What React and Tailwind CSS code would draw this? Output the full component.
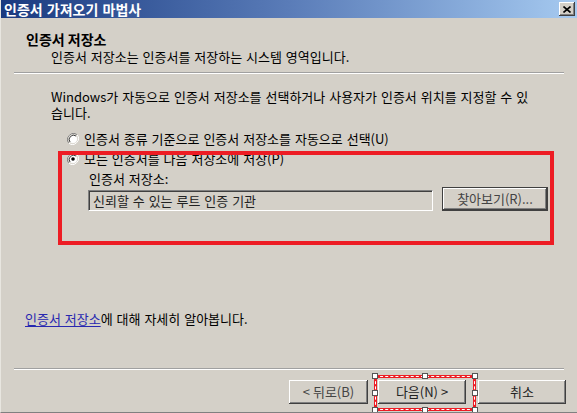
import React from "react";

const btn3d =
  "shadow-[inset_-1px_-1px_0_#404040,inset_1px_1px_0_#ffffff,inset_-2px_-2px_0_#808080,inset_2px_2px_0_#d4d0c8]";

function Radio({ checked }) {
  return (
    <svg width="12" height="12" viewBox="0 0 12 12" className="shrink-0">
      <path d="M10.2 1.8A6 6 0 0 0 1.8 10.2" fill="none" stroke="#808080" strokeWidth="1" />
      <path d="M1.8 10.2A6 6 0 0 0 10.2 1.8" fill="none" stroke="#ffffff" strokeWidth="1" />
      <circle cx="6" cy="6" r="4.5" fill="#ffffff" stroke="#d4d0c8" strokeWidth="0.6" />
      <path d="M9 3A4.3 4.3 0 0 0 3 9" fill="none" stroke="#404040" strokeWidth="1" />
      {checked && <circle cx="6" cy="6" r="1.8" fill="#000000" />}
    </svg>
  );
}

function Separator() {
  return <div className="mx-[13px] h-[2px] border-t border-t-[#a0a0a0] border-b border-b-white" />;
}

function Handle({ className }) {
  return <div className={"absolute w-[6px] h-[6px] bg-white border border-[#555] " + className} />;
}

export default function App() {
  return (
    <div className="relative w-[577px] h-[413px] overflow-hidden bg-[#d4d0c8] flex flex-col text-black font-['Noto_Sans_CJK_KR','Noto_Sans',sans-serif] text-[13px] [word-spacing:1px] border-b border-b-[#808080] border-l border-l-[#e8e6e0]">
      {/* title bar */}
      <div className="h-[18px] shrink-0 flex items-center justify-between pl-[3px] pr-[2px] bg-gradient-to-r from-[#1a3a80] via-[#5a7cb8] to-[#a6caf0]">
        <span className="text-white font-bold text-[14px] leading-none [word-spacing:1px]">인증서 가져오기 마법사</span>
        <button className={"w-[16px] h-[14px] bg-[#d4d0c8] flex items-center justify-center " + btn3d}>
          <svg width="8" height="7" viewBox="0 0 8 7">
            <path d="M0.5 0.5L7.5 6.5M7.5 0.5L0.5 6.5" stroke="#000" strokeWidth="1.6" />
          </svg>
        </button>
      </div>

      {/* header */}
      <div className="pl-[25px] pt-[13px]">
        <div className="font-bold text-[14px] leading-[16px] [word-spacing:0]">인증서 저장소</div>
        <div className="pl-[25px] mt-[2px] leading-[16px]">인증서 저장소는 인증서를 저장하는 시스템 영역입니다.</div>
      </div>
      <div className="mt-[7px]">
        <Separator />
      </div>

      {/* body */}
      <div className="pl-[50px] pt-[15px]">
        <div className="leading-[16px]">Windows가 자동으로 인증서 저장소를 선택하거나 사용자가 인증서 위치를 지정할 수 있</div>
        <div className="leading-[16px]">습니다.</div>
        <div className="mt-[10px] pl-[16px] h-[16px] flex items-center gap-[5px]">
          <Radio />
          <span>인증서 종류 기준으로 인증서 저장소를 자동으로 선택(U)</span>
        </div>
        <div className="mt-[4px] pl-[16px] h-[16px] flex items-center gap-[5px]">
          <Radio checked />
          <span>모든 인증서를 다음 저장소에 저장(P)</span>
        </div>
        <div className="mt-[4px] pl-[38px] leading-[16px]">인증서 저장소:</div>
        <div className="pl-[37px] flex items-end gap-[9px]">
          <div className="w-[345px] h-[21px] flex items-center pl-[4px] border border-t-[#808080] border-l-[#808080] border-b-white border-r-white shadow-[inset_1px_1px_0_#404040,inset_-1px_-1px_0_#d4d0c8] text-[#222]">
            신뢰할 수 있는 루트 인증 기관
          </div>
          <button className={"w-[106px] h-[24px] border border-[#404040] bg-[#d4d0c8] text-[#444] flex items-center justify-center " + btn3d}>
            찾아보기(R)...
          </button>
        </div>
      </div>

      {/* learn more link */}
      <div className="mt-[100px] pl-[24px] leading-[16px]">
        <span className="text-[#2828b0] underline underline-offset-2">인증서 저장소</span>에 대해 자세히 알아봅니다.
      </div>

      <div className="mt-[41px]">
        <Separator />
      </div>

      {/* buttons */}
      <div className="mt-[10px] flex justify-end pr-[11px]">
        <button className={"w-[79px] h-[24px] bg-[#d4d0c8] text-[#444] flex items-center justify-center " + btn3d}>
          &lt; 뒤로(B)
        </button>
        <button className={"ml-[10px] w-[88px] h-[24px] bg-[#d4d0c8] text-[#222] flex items-center justify-center " + btn3d}>
          다음(N) &gt;
        </button>
        <button className={"ml-[12px] w-[88px] h-[24px] bg-[#d4d0c8] text-[#222] flex items-center justify-center " + btn3d}>
          취소
        </button>
      </div>

      {/* annotation: red box around the store option */}
      <div className="absolute left-[57px] top-[151px] w-[496px] h-[94px] border-4 border-[#ed1c24] pointer-events-none" />

      {/* annotation: selection around next button */}
      <div className="absolute left-[373px] top-[375px] w-[102px] h-[36px] border-[3px] border-[#ed1c24] pointer-events-none">
        <div className="absolute inset-[-2px] border border-dashed border-white" />
        <Handle className="left-[-5px] top-[-5px]" />
        <Handle className="left-[45px] top-[-5px]" />
        <Handle className="right-[-5px] top-[-5px]" />
        <Handle className="left-[-5px] top-[12px]" />
        <Handle className="right-[-5px] top-[12px]" />
        <Handle className="left-[-5px] bottom-[-5px]" />
        <Handle className="left-[45px] bottom-[-5px]" />
        <Handle className="right-[-5px] bottom-[-5px]" />
      </div>
    </div>
  );
}
